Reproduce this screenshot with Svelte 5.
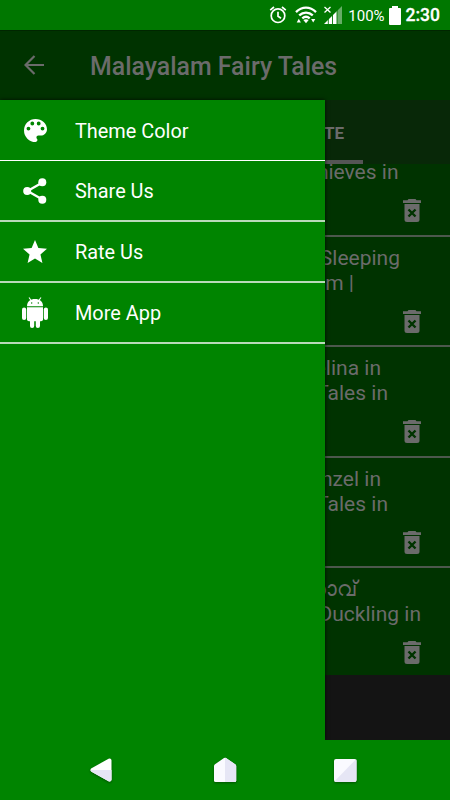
<script>
  const menu = [
    { icon: 'palette', label: 'Theme Color' },
    { icon: 'share', label: 'Share Us' },
    { icon: 'star', label: 'Rate Us' },
    { icon: 'android', label: 'More App' }
  ];

  // end is where each wrapped line stops in the list
  const stories = [
    [{ text: 'Ali Baba and the Forty', end: 400 }, { text: 'Thieves in', end: 398.5 }],
    [{ text: 'Sleeping', end: 400 }, { text: 'Malayalam |', end: 354 }],
    [{ text: 'Thumbelina in', end: 381 }, { text: 'Malayalam | Fairy Tales in', end: 388 }],
    [{ text: 'Rapunzel in', end: 381 }, { text: 'Malayalam | Fairy Tales in', end: 388 }],
    [{ text: 'താറാവ്', end: 357 }, { text: 'Ugly Duckling in', end: 421 }]
  ];
</script>

<div class="phone">
  <header class="status">
    <svg class="alarm" viewBox="0 0 18 18" width="18" height="18">
      <g fill="none" stroke="#fff" stroke-width="1.7">
        <circle cx="9" cy="9.7" r="6.8" />
        <path d="M9 5.8v4.4l3 2M1.2 4.2L5 1M13 1l3.8 3.2" />
      </g>
    </svg>
    <svg class="wifi" viewBox="0 0 22 18" width="22" height="18">
      <g fill="none" stroke="#fff" stroke-width="2.3">
        <path d="M1 6.1C7 .2 15 .2 21 6.1M4.2 9.4c4-3.8 9.6-3.8 13.6 0M7.3 12.4c2.2-2 5.2-2 7.4 0" />
      </g>
      <path d="M8.3 14.1c1.7-1.2 3.7-1.2 5.4 0L11 17.3zM1.7 16.5l2.1-3.7 2.1 3.7zM16.1 13h4.2l-2.1 3.6z" fill="#fff" />
    </svg>
    <svg class="signal" viewBox="0 0 18 18" width="18" height="18">
      <path d="M13 5l5-5v18h-5z" fill="#fff" opacity=".4" />
      <path d="M0 18l13-13v13z" fill="#fff" />
      <path d="M4.3 12v6M8.5 8v10M13 4v14" stroke="#007700" stroke-width=".9" />
      <path d="M.5 1l6 5.5M6.5 1l-6 5.500" stroke="#fff" stroke-width="1.3" />
    </svg>
    <span class="percent">100%</span>
    <svg class="battery" viewBox="0 0 12 19" width="12" height="19">
      <path d="M3 0h6v2h2q1 0 1 1v15q0 1-1 1H1q-1 0-1-1V3q0-1 1-1h2z" fill="#fff" />
    </svg>
    <span class="time">2:30</span>
  </header>

  <div class="app">
    <div class="toolbar">
      <svg viewBox="0 0 20 20" width="20" height="20">
        <path d="M20 10H2M10.5 1L1.5 10l9 9" fill="none" stroke="#6b6b6b" stroke-width="2.2" />
      </svg>
      <h1>Malayalam Fairy Tales</h1>
    </div>

    <div class="tabs">
      <div class="tab active">FAVORITE</div>
    </div>

    <div class="list">
      <div class="scroll">
        {#each stories as lines}
          <div class="story">
            {#each lines as line}
              <p style="width: {line.end}px">{line.text}</p>
            {/each}
            <svg class="trash" viewBox="0 0 18 23" width="18" height="23">
              <path d="M5.5 0h7l1 1.2H18v2.7H0V1.2h4.5z" fill="#6b6b6b" />
              <path d="M1.500 5h15v15.500q0 2.500-2.500 2.500H4q-2.500 0-2.500-2.500z" fill="#6b6b6b" />
              <path d="M5.500 10.500l7 7M12.500 10.500l-7 7" stroke="#003300" stroke-width="2.400" />
            </svg>
          </div>
        {/each}
      </div>
    </div>

    <div class="ad"></div>

    <nav class="drawer">
      {#each menu as item}
        <a href="#{item.icon}">
          <span class="icon">
            {#if item.icon === 'palette'}
              <svg viewBox="3 3 18 18" width="23" height="23">
                <path d="M12 3a9 9 0 0 0 0 18c.83 0 1.5-.67 1.5-1.5 0-.39-.15-.74-.39-1.01-.23-.26-.38-.61-.38-.99 0-.83.67-1.5 1.5-1.5H16c2.76 0 5-2.24 5-5 0-4.42-4.03-8-9-8zm-5.5 9a1.5 1.5 0 1 1 0-3 1.5 1.5 0 0 1 0 3zm3-4a1.5 1.5 0 1 1 0-3 1.5 1.5 0 0 1 0 3zm5 0a1.5 1.5 0 1 1 0-3 1.5 1.5 0 0 1 0 3zm3 4a1.5 1.5 0 1 1 0-3 1.5 1.5 0 0 1 0 3z" fill="#fff" />
              </svg>
            {:else if item.icon === 'share'}
              <svg viewBox="0 0 24 26" width="24" height="26">
                <path d="M19.5 4.5L4.5 13l15 8.5" fill="none" stroke="#fff" stroke-width="2.3" />
                <g fill="#fff">
                  <circle cx="19.3" cy="4.3" r="4" />
                  <circle cx="4.2" cy="13" r="4" />
                  <circle cx="19.3" cy="21.7" r="4" />
                </g>
              </svg>
            {:else if item.icon === 'star'}
              <svg viewBox="2 2 20 19" width="24" height="23">
                <path d="M12 17.27L18.18 21l-1.64-7.03L22 9.24l-7.19-.61L12 2 9.19 8.63 2 9.24l5.46 4.73L5.82 21z" fill="#fff" />
              </svg>
            {:else}
              <svg viewBox="0 0 26 31" width="26" height="31">
                <g fill="#fff">
                  <path d="M5 9.2C5 4.5 8.5 2 13 2s8 2.500 8 7.200z" />
                  <path d="M5 10.300h16v12q0 2-2 2H7q-2 0-2-2z" />
                  <rect x="0" y="10.500" width="4.200" height="12.500" rx="2.100" />
                  <rect x="21.800" y="10.500" width="4.200" height="12.500" rx="2.100" />
                  <rect x="8" y="21" width="4.200" height="10" rx="2.100" />
                  <rect x="13.800" y="21" width="4.200" height="10" rx="2.100" />
                </g>
                <path d="M7 .5l2.200 3M19 .5l-2.200 3" stroke="#fff" stroke-width="1.100" />
                <circle cx="9.700" cy="6" r=".7" fill="#008400" />
                <circle cx="16.300" cy="6" r=".7" fill="#008400" />
              </svg>
            {/if}
          </span>
          <span class="label">{item.label}</span>
        </a>
      {/each}
    </nav>
  </div>

  <footer class="navbar">
    <svg class="back" viewBox="0 0 24 28" width="24" height="28">
      <path d="M3.500 14L20.500 4.500V23.500z" fill="#fff" stroke="#fff" stroke-width="4" stroke-linejoin="round" />
      <path d="M1.500 14h21v9.500q0 2.500-3 1.700L2.500 15.700z" fill="#e6e6f5" />
    </svg>
    <svg viewBox="0 0 24 28" width="24" height="28">
      <path d="M11 2q1-.6 2 0l9.500 6.500q.7.500.7 1.500v14.500q0 1.500-1.500 1.500H2.500Q1 26 1 24.500V10q0-1 .7-1.500z" fill="#fafaff" />
      <path d="M12 1.700q.5 0 1 .3l9.500 6.500q.7.500.7 1.500v14.500q0 1.500-1.500 1.500H12z" fill="#e6e6f5" />
    </svg>
    <svg viewBox="0 0 24 28" width="24" height="28">
      <rect x="1" y="3" width="22.500" height="23" rx="2" fill="#fafaff" />
      <path d="M23.500 4v20q0 2-2 2H3q-1 0-1.500-.7L23 3.300z" fill="#e6e6f5" />
    </svg>
  </footer>
</div>

<style>
  :global(body) {
    margin: 0;
  }

  .phone {
    width: 450px;
    height: 800px;
    display: flex;
    flex-direction: column;
    overflow: hidden;
    background: #008400;
    font-family: Roboto, 'Noto Sans', sans-serif;
    color: #fff;
  }

  .status {
    height: 30px;
    box-sizing: border-box;
    padding-right: 10px;
    display: flex;
    align-items: center;
    justify-content: flex-end;
    background: #007700;
  }

  .wifi {
    margin-left: 8px;
  }

  .signal {
    margin-left: 7px;
  }

  .percent {
    margin: 1px 0 0 6px;
    font-size: 15px;
  }

  .battery {
    margin-left: 4px;
  }

  .time {
    margin-left: 5px;
    font-size: 17.5px;
    font-weight: 500;
    -webkit-text-stroke: 0.3px #fff;
  }

  .app {
    position: relative;
    height: 710px;
    overflow: hidden;
    display: flex;
    flex-direction: column;
    background: #141414;
    color: #6b6b6b;
  }

  .toolbar {
    height: 70px;
    flex: none;
    box-sizing: border-box;
    border-top: 1px solid #002600;
    display: flex;
    align-items: center;
    padding-left: 24px;
    background: #003300;
  }

  .toolbar svg {
    margin-top: -2px;
  }

  h1 {
    margin: 2px 0 0 46px;
    font-size: 24.9px;
    font-weight: 500;
    white-space: nowrap;
  }

  .tabs {
    height: 64px;
    flex: none;
    display: flex;
    padding-left: 237px;
    background: #082808;
  }

  .tab {
    width: 126px;
    box-sizing: border-box;
    padding-right: 19px;
    text-align: right;
    font-size: 17px;
    font-weight: 700;
    line-height: 66px;
    height: 64px;
    border-bottom: 4px solid #555;
  }

  .list {
    height: 511px;
    flex: none;
    overflow: hidden;
    background: #003300;
  }

  .scroll {
    margin-top: -37.6px;
  }

  .story {
    height: 110.4px;
    box-sizing: border-box;
    padding-top: 9px;
    border-bottom: 2px solid #4d584d;
    display: flex;
    flex-direction: column;
  }

  .story:last-child {
    border-bottom: none;
  }

  .story p {
    margin: 0;
    height: 25px;
    line-height: 25px;
    font-size: 21px;
    text-align: right;
    white-space: nowrap;
  }

  .trash {
    margin: 14px 0 0 403px;
  }

  .drawer {
    position: absolute;
    top: 70px;
    left: 0;
    bottom: 0;
    width: 325px;
    background: #008400;
    box-shadow: 0 0 4px rgba(0, 0, 0, 0.8);
  }

  .drawer a {
    height: 61px;
    box-sizing: border-box;
    border-bottom: 2px solid #b9dab9;
    display: flex;
    align-items: center;
    font-size: 19.9px;
    color: #fff;
    text-decoration: none;
  }

  .drawer a:first-child {
    border-bottom: 1px solid #fff;
  }

  .icon {
    width: 70px;
    margin-right: 5px;
    display: flex;
    justify-content: center;
  }

  .label {
    padding-top: 2px;
  }

  .navbar {
    height: 60px;
    display: flex;
    align-items: center;
    justify-content: center;
    gap: 96px;
  }

  .navbar svg {
    filter: drop-shadow(0 1px 1px rgba(0, 0, 0, 0.35));
  }

  .navbar .back {
    margin: 0 4px 0 -4px;
  }
</style>
